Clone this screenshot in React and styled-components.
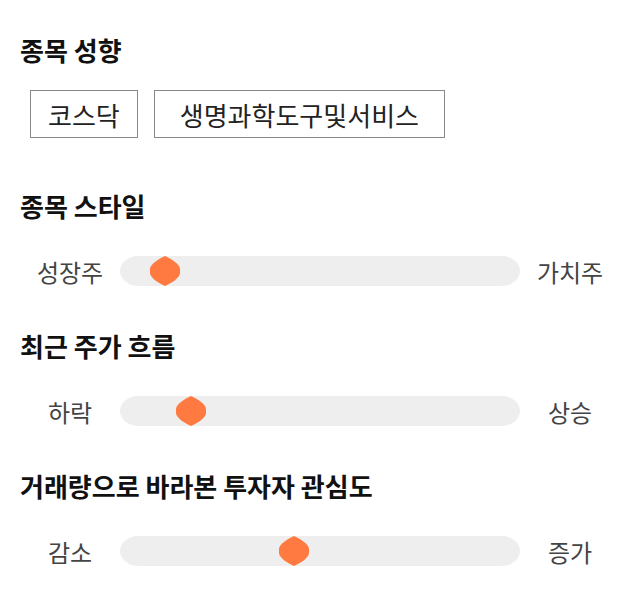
import styled, { createGlobalStyle } from "styled-components";

const GlobalStyle = createGlobalStyle`
  body {
    margin: 0;
    background: #fff;
    font-family: "Noto Sans CJK KR", "Noto Sans", sans-serif;
  }
`;

const Container = styled.div`
  width: 640px;
  box-sizing: border-box;
  padding: 32px 20px;
`;

const Section = styled.section`
  margin-top: ${(props) => props.$gap || 0}px;
`;

const Title = styled.h2`
  margin: 0;
  font-size: 26px;
  line-height: 36px;
  font-weight: 700;
  color: #111;
`;

const TagRow = styled.div`
  display: flex;
  gap: 16px;
  margin-top: 22px;
  padding-left: 10px;
`;

const Tag = styled.div`
  height: 48px;
  box-sizing: border-box;
  padding: 0 ${(props) => (props.$wide ? 25 : 17)}px;
  border: 1px solid #888;
  display: flex;
  align-items: center;
  font-size: 26px;
  color: #222;
`;

const SliderRow = styled.div`
  display: grid;
  grid-template-columns: 100px 1fr 100px;
  align-items: center;
  height: 40px;
  margin-top: 27px;
`;

const Label = styled.span`
  text-align: center;
  font-size: 24px;
  color: #444;
`;

const Track = styled.div`
  position: relative;
  height: 30px;
  background: #eeeeee;
  border-radius: 18px / 15px;
`;

const Thumb = styled.svg`
  position: absolute;
  top: 0;
  width: 30px;
  height: 30px;
`;

const sliders = [
  { title: "종목 스타일", left: "성장주", right: "가치주", value: 0.08 },
  { title: "최근 주가 흐름", left: "하락", right: "상승", value: 0.15 },
  { title: "거래량으로 바라본 투자자 관심도", left: "감소", right: "증가", value: 0.43 },
];

const App = () => {
  return (
    <Container>
      <GlobalStyle />
      <Section>
        <Title>종목 성향</Title>
        <TagRow>
          <Tag>코스닥</Tag>
          <Tag $wide>생명과학도구및서비스</Tag>
        </TagRow>
      </Section>
      {sliders.map((s, i) => (
        <Section key={s.title} $gap={i === 0 ? 50 : 37}>
          <Title>{s.title}</Title>
          <SliderRow>
            <Label>{s.left}</Label>
            <Track>
              <Thumb
                viewBox="0 0 30 30"
                style={{ left: `calc((100% - 30px) * ${s.value})` }}
              >
                <path
                  d="M15 0C20 2 30 8 30 13V17C30 22 20 28 15 30C10 28 0 22 0 17V13C0 8 10 2 15 0Z"
                  fill="#ff7a40"
                />
              </Thumb>
            </Track>
            <Label>{s.right}</Label>
          </SliderRow>
        </Section>
      ))}
    </Container>
  );
};

export default App;
